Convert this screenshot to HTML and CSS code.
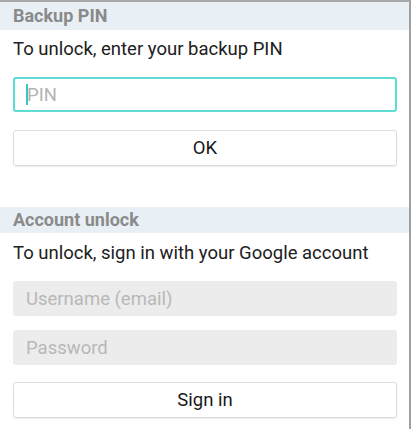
FILE: index.html
```html
<!DOCTYPE html>
<html>
<head>
<meta charset="utf-8">
<link rel="stylesheet" href="styles.css">
</head>
<body>
<div class="screen">
  <div class="section-head">Backup PIN</div>
  <div class="section-body">
    <p class="hint">To unlock, enter your backup PIN</p>
    <div class="field field-active"><span class="cursor"></span><span class="ph">PIN</span></div>
    <div class="btn">OK</div>
  </div>
  <div class="section-head head-2">Account unlock</div>
  <div class="section-body">
    <p class="hint">To unlock, sign in with your Google account</p>
    <div class="field field-disabled"><span class="ph">Username (email)</span></div>
    <div class="field field-disabled"><span class="ph">Password</span></div>
    <div class="btn">Sign in</div>
  </div>
</div>
</body>
</html>
```
FILE: styles.css
```css
html, body {
  margin: 0;
  padding: 0;
  background: #ffffff;
}
body {
  font-family: Roboto, "Noto Sans", sans-serif;
  width: 415px;
  height: 429px;
  overflow: hidden;
}
.screen {
  width: 409px;
  height: 427px;
  border-top: 2px solid #a8a8a8;
  border-right: 2px solid #a0a0a0;
  display: flex;
  flex-direction: column;
}
.section-head {
  background: #e9f0f5;
  color: #8a8a8a;
  font-weight: bold;
  font-size: 18px;
  height: 28px;
  line-height: 28px;
  padding-left: 13px;
}
.head-2 {
  margin-top: 41px;
  height: 26px;
  line-height: 26px;
}
.section-body {
  padding: 0 12px 0 13px;
  display: flex;
  flex-direction: column;
}
.hint {
  margin: 0;
  font-size: 18.5px;
  color: #202020;
  height: 20px;
  line-height: 20px;
  margin-top: 9px;
  margin-bottom: 18px;
}
.head-2 + .section-body .hint {
  margin-top: 10px;
  margin-bottom: 18px;
}
.field {
  box-sizing: border-box;
  height: 35px;
  border-radius: 3px;
  display: flex;
  align-items: center;
  padding-left: 13px;
  font-size: 18.5px;
}
.ph {
  color: #b4b4b4;
}
.field-active {
  border: 2px solid #5ddcd3;
  padding-left: 11px;
}
.cursor {
  display: inline-block;
  width: 2px;
  height: 21px;
  background: #3cc8c0;
  margin-right: -1px;
}
.field-disabled {
  background: #ececec;
  margin-bottom: 14px;
}
.field-disabled .ph {
  color: #b8b8b8;
}
.btn {
  box-sizing: border-box;
  height: 36px;
  border: 1px solid #dcdcdc;
  border-radius: 3px;
  box-shadow: 0 1px 1px rgba(0,0,0,0.08);
  display: flex;
  align-items: center;
  justify-content: center;
  font-size: 18.5px;
  color: #1a1a1a;
}
.field-active + .btn {
  margin-top: 18px;
}
.field-disabled + .btn {
  margin-top: 3px;
}
```
